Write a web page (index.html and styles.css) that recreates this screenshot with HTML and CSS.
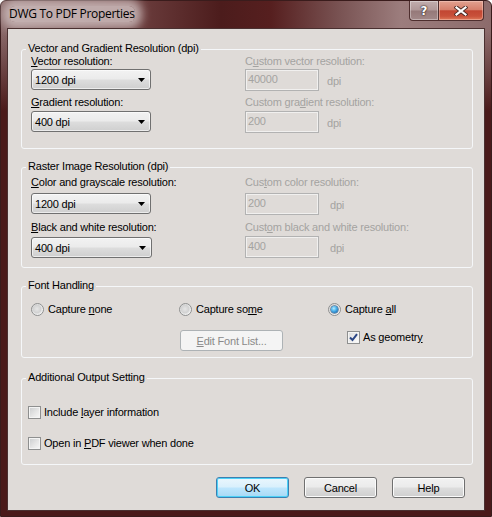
FILE: index.html
```html
<!DOCTYPE html>
<html>
<head>
<meta charset="utf-8">
<title>DWG To PDF Properties</title>
<link rel="stylesheet" href="styles.css">
</head>
<body>
<div class="window">
  <div class="titlebar">
    <span class="title">DWG To PDF Properties</span>
    <div class="caption">
      <div class="cap-btn cap-help">?</div>
      <div class="cap-btn cap-close">
        <svg width="14" height="10" viewBox="0 0 14 10">
          <path d="M2.5 1.5 L11.5 8.5 M11.5 1.5 L2.5 8.5" stroke="#4a2a24" stroke-width="4" stroke-linecap="square" fill="none"/>
          <path d="M2.5 1.5 L11.5 8.5 M11.5 1.5 L2.5 8.5" stroke="#ffffff" stroke-width="2.2" stroke-linecap="square" fill="none"/>
        </svg>
      </div>
    </div>
  </div>

  <div class="client">
    <section class="group g1">
      <div class="group-title">Vector and Gradient Resolution (dpi)</div>
      <div class="fields g1-fields">
        <div class="lbl"><u>V</u>ector resolution:</div>
        <div class="lbl dis">C<u>u</u>stom vector resolution:</div>
        <div class="combo"><span>1200 dpi</span><svg width="7" height="4" viewBox="0 0 7 4"><path d="M0 0H7L3.5 4Z" fill="#000"/></svg></div>
        <div class="tbrow"><div class="tb">40000</div><span class="unit">dpi</span></div>
        <div class="lbl"><u>G</u>radient resolution:</div>
        <div class="lbl dis">Custom gra<u>d</u>ient resolution:</div>
        <div class="combo"><span>400 dpi</span><svg width="7" height="4" viewBox="0 0 7 4"><path d="M0 0H7L3.5 4Z" fill="#000"/></svg></div>
        <div class="tbrow"><div class="tb">200</div><span class="unit">dpi</span></div>
      </div>
    </section>

    <section class="group g2">
      <div class="group-title">Raster Image Resolution (dpi)</div>
      <div class="fields g2-fields">
        <div class="lbl"><u>C</u>olor and grayscale resolution:</div>
        <div class="lbl dis">Cus<u>t</u>om color resolution:</div>
        <div class="combo"><span>1200 dpi</span><svg width="7" height="4" viewBox="0 0 7 4"><path d="M0 0H7L3.5 4Z" fill="#000"/></svg></div>
        <div class="tbrow"><div class="tb">200</div><span class="unit">dpi</span></div>
        <div class="lbl"><u>B</u>lack and white resolution:</div>
        <div class="lbl dis">Cust<u>o</u>m black and white resolution:</div>
        <div class="combo wide"><span>400 dpi</span><svg width="7" height="4" viewBox="0 0 7 4"><path d="M0 0H7L3.5 4Z" fill="#000"/></svg></div>
        <div class="tbrow"><div class="tb">400</div><span class="unit">dpi</span></div>
      </div>
    </section>

    <section class="group g3">
      <div class="group-title">Font Handling</div>
      <div class="font-grid">
        <label class="opt"><span class="radio"></span><span>Capture <u>n</u>one</span></label>
        <label class="opt"><span class="radio"></span><span>Capture so<u>m</u>e</span></label>
        <label class="opt"><span class="radio checked"></span><span>Capture <u>a</u>ll</span></label>
        <div></div>
        <div class="btn disabled edit-btn"><span><u>E</u>dit Font List...</span></div>
        <label class="opt geo"><span class="check checked"><svg width="11" height="11" viewBox="0 0 11 11"><path d="M2 5.5 L4.5 8 L9 2.2" stroke="#2b4685" stroke-width="2" fill="none"/></svg></span><span>As geometr<u>y</u></span></label>
      </div>
    </section>

    <section class="group g4">
      <div class="group-title">Additional Output Setting</div>
      <div class="checks">
        <label class="opt"><span class="check"></span><span>Include <u>l</u>ayer information</span></label>
        <label class="opt"><span class="check"></span><span>Open in <u>P</u>DF viewer when done</span></label>
      </div>
    </section>

    <div class="buttons">
      <div class="btn default">OK</div>
      <div class="btn">Cancel</div>
      <div class="btn">Help</div>
    </div>
  </div>
</div>
</body>
</html>
```

FILE: styles.css
```css
html, body {
  margin: 0;
  padding: 0;
  background: #ffffff;
}

.window {
  width: 492px;
  height: 517px;
  box-sizing: border-box;
  border: 1px solid #3a1c1c;
  border-radius: 6px 6px 0 0;
  padding: 0 6px 5px;
  display: flex;
  flex-direction: column;
  background:
    linear-gradient(180deg, rgba(74,26,26,0) 0px, rgba(74,26,26,0) 30px, rgba(74,26,26,1) 110px),
    linear-gradient(90deg, #8a6a6a 0px, #6a3c3c 140px, #4c1c1c 220px, #561f1f 270px, #7a5454 340px, #9c7d7d 400px, #8c6b6b 491px);
  font-family: "Liberation Sans", Arial, sans-serif;
  font-size: 11px;
  letter-spacing: -0.2px;
  color: #000;
}

/* ---------- title bar ---------- */
.titlebar {
  height: 27px;
  display: flex;
  align-items: flex-start;
  flex-shrink: 0;
}

.title {
  margin: 5px 0 0 2px;
  font-family: "Open Sans", "Noto Sans", sans-serif;
  font-size: 12px;
  line-height: 16px;
  letter-spacing: -0.3px;
  color: #000;
  background: rgba(205, 188, 188, 0.85);
  box-shadow: 0 0 10px 7px rgba(205, 188, 188, 0.85);
  border-radius: 6px;
}

.caption {
  margin-left: auto;
  margin-right: 1px;
  display: flex;
}

.cap-btn {
  height: 20px;
  box-sizing: border-box;
  display: flex;
  align-items: center;
  justify-content: center;
  border: 1px solid #4e2e2e;
  border-top: none;
}

.cap-help {
  width: 29px;
  border-right: none;
  border-radius: 0 0 0 4px;
  background: linear-gradient(180deg, #c2aeae 0%, #b09898 48%, #957979 52%, #a28888 100%);
  box-shadow: inset 0 0 0 1px rgba(255,255,255,0.35);
  font-family: "DejaVu Sans", sans-serif;
  font-weight: bold;
  font-size: 12px;
  color: #fff;
  text-shadow: 0 0 1px #3a2a2a, 0 0 1px #3a2a2a, 0 0 2px #3a2a2a;
  letter-spacing: 0;
}

.cap-close {
  width: 46px;
  border-radius: 0 0 4px 0;
  background: linear-gradient(180deg, #e2a291 0%, #d6806c 45%, #c24632 52%, #c9513a 80%, #de7a5a 100%);
  box-shadow: inset 0 0 0 1px rgba(255,220,210,0.4);
}

/* ---------- client ---------- */
.client {
  flex: 1;
  border: 1px solid #4a3030;
  background: #dfdbd8;
  padding: 20px 11px 0 13px;
  display: flex;
  flex-direction: column;
}

.group {
  border: 1px solid #f5f7f9;
  border-radius: 3px;
}

.g2 { margin-top: 18px; }
.g3 { margin-top: 18px; }
.g4 { margin-top: 20px; }

.group-title {
  height: 14px;
  line-height: 14px;
  margin: -9px 0 -5px 4px;
  padding: 0 2px;
  width: max-content;
  background: #dfdbd8;
  white-space: nowrap;
}

.lbl {
  line-height: 14px;
  height: 14px;
  white-space: nowrap;
}

.dis, .dis u { color: #a4a3a1; }

.fields {
  display: grid;
  grid-template-columns: 214px 1fr;
  padding-left: 9px;
  align-items: start;
}

.g1-fields {
  grid-template-rows: 15px 26px 16px 22px;
  margin: 4px 0 15px;
}

.g2-fields {
  grid-template-rows: 18px 27px 16px 22px;
  margin: 7px 0 9px;
}

.combo {
  width: 120px;
  height: 21px;
  box-sizing: border-box;
  border: 1px solid #707070;
  border-radius: 3px;
  background: linear-gradient(180deg, #f2f2f2 0%, #ebebeb 48%, #dddddd 52%, #cfcfcf 100%);
  box-shadow: inset 0 0 0 1px rgba(255,255,255,0.6);
  display: flex;
  align-items: center;
  justify-content: space-between;
  padding: 0 5px 0 3px;
}

.g2-fields .combo.wide { width: 121px; margin-top: 1px; }

.tbrow {
  display: flex;
  align-items: center;
}

.tb {
  width: 74px;
  height: 22px;
  box-sizing: border-box;
  border: 1px solid #b2b2b2;
  box-shadow: inset 0 0 0 1px #f1f0ef;
  padding: 0 0 2px 2px;
  display: flex;
  align-items: center;
  color: #a4a3a1;
}

.unit {
  margin-left: 8px;
  margin-top: 2px;
  color: #a4a3a1;
}

.g2-fields .unit { margin-left: 11px; }

/* ---------- font handling ---------- */
.font-grid {
  display: grid;
  grid-template-columns: 148px 149px 1fr;
  grid-template-rows: 28px 21px;
  padding-left: 9px;
  margin: 15px 0 6px;
  align-items: start;
}

.opt {
  display: flex;
  align-items: center;
  height: 14px;
  line-height: 14px;
  white-space: nowrap;
}

.radio {
  width: 13px;
  height: 13px;
  box-sizing: border-box;
  border: 1px solid #8e8f8f;
  border-radius: 50%;
  background: radial-gradient(circle at 45% 45%, #e6e6e6 0%, #d2d2d2 45%, #f4f4f4 70%, #ffffff 100%);
  margin-right: 4px;
  display: flex;
  align-items: center;
  justify-content: center;
}

.radio.checked::after {
  content: "";
  width: 7px;
  height: 7px;
  border-radius: 50%;
  background: radial-gradient(circle at 40% 35%, #b8ecff 0%, #4fb4ec 40%, #1b6fb5 80%, #195d94 100%);
  box-shadow: 0 0 0 0.5px #1d4f80;
}

.check {
  width: 13px;
  height: 13px;
  box-sizing: border-box;
  border: 1px solid #8e8f8f;
  background: linear-gradient(135deg, #c9cbcd 0%, #e6e6e6 55%, #f8f8f8 100%);
  box-shadow: inset 0 0 0 1px #f4f4f4;
  margin-right: 3px;
  display: flex;
  align-items: center;
  justify-content: center;
}

.check.checked {
  background: linear-gradient(135deg, #dcdcdc 0%, #f0f0f0 60%, #ffffff 100%);
}

.geo { margin-left: 19px; }

/* ---------- additional ---------- */
.checks {
  display: flex;
  flex-direction: column;
  gap: 17px;
  padding-left: 6px;
  margin: 26px 0 14px;
}

/* ---------- buttons ---------- */
.btn {
  width: 73px;
  height: 21px;
  box-sizing: border-box;
  border: 1px solid #707070;
  border-radius: 3px;
  background: linear-gradient(180deg, #f2f2f2 0%, #ebebeb 48%, #dddddd 52%, #cfcfcf 100%);
  box-shadow: inset 0 0 0 1px #fbfbfb;
  display: flex;
  align-items: center;
  justify-content: center;
  white-space: nowrap;
}

.btn.default {
  border-color: #3c7fb1;
  background: linear-gradient(180deg, #eaf6fd 0%, #d9f0fc 48%, #bee6fd 52%, #a7d9f5 100%);
  box-shadow: inset 0 0 0 1px #4cd1f7;
}

.btn.disabled {
  border-color: #adb2b5;
  background: #f4f4f4;
  box-shadow: none;
  color: #8a8a8a;
}

.btn.disabled u { color: #8a8a8a; }

.btn.edit-btn {
  width: 103px;
  margin-left: 1px;
}

.buttons {
  display: flex;
  justify-content: flex-end;
  gap: 15px;
  margin-top: 12px;
  padding-right: 8px;
}
```
